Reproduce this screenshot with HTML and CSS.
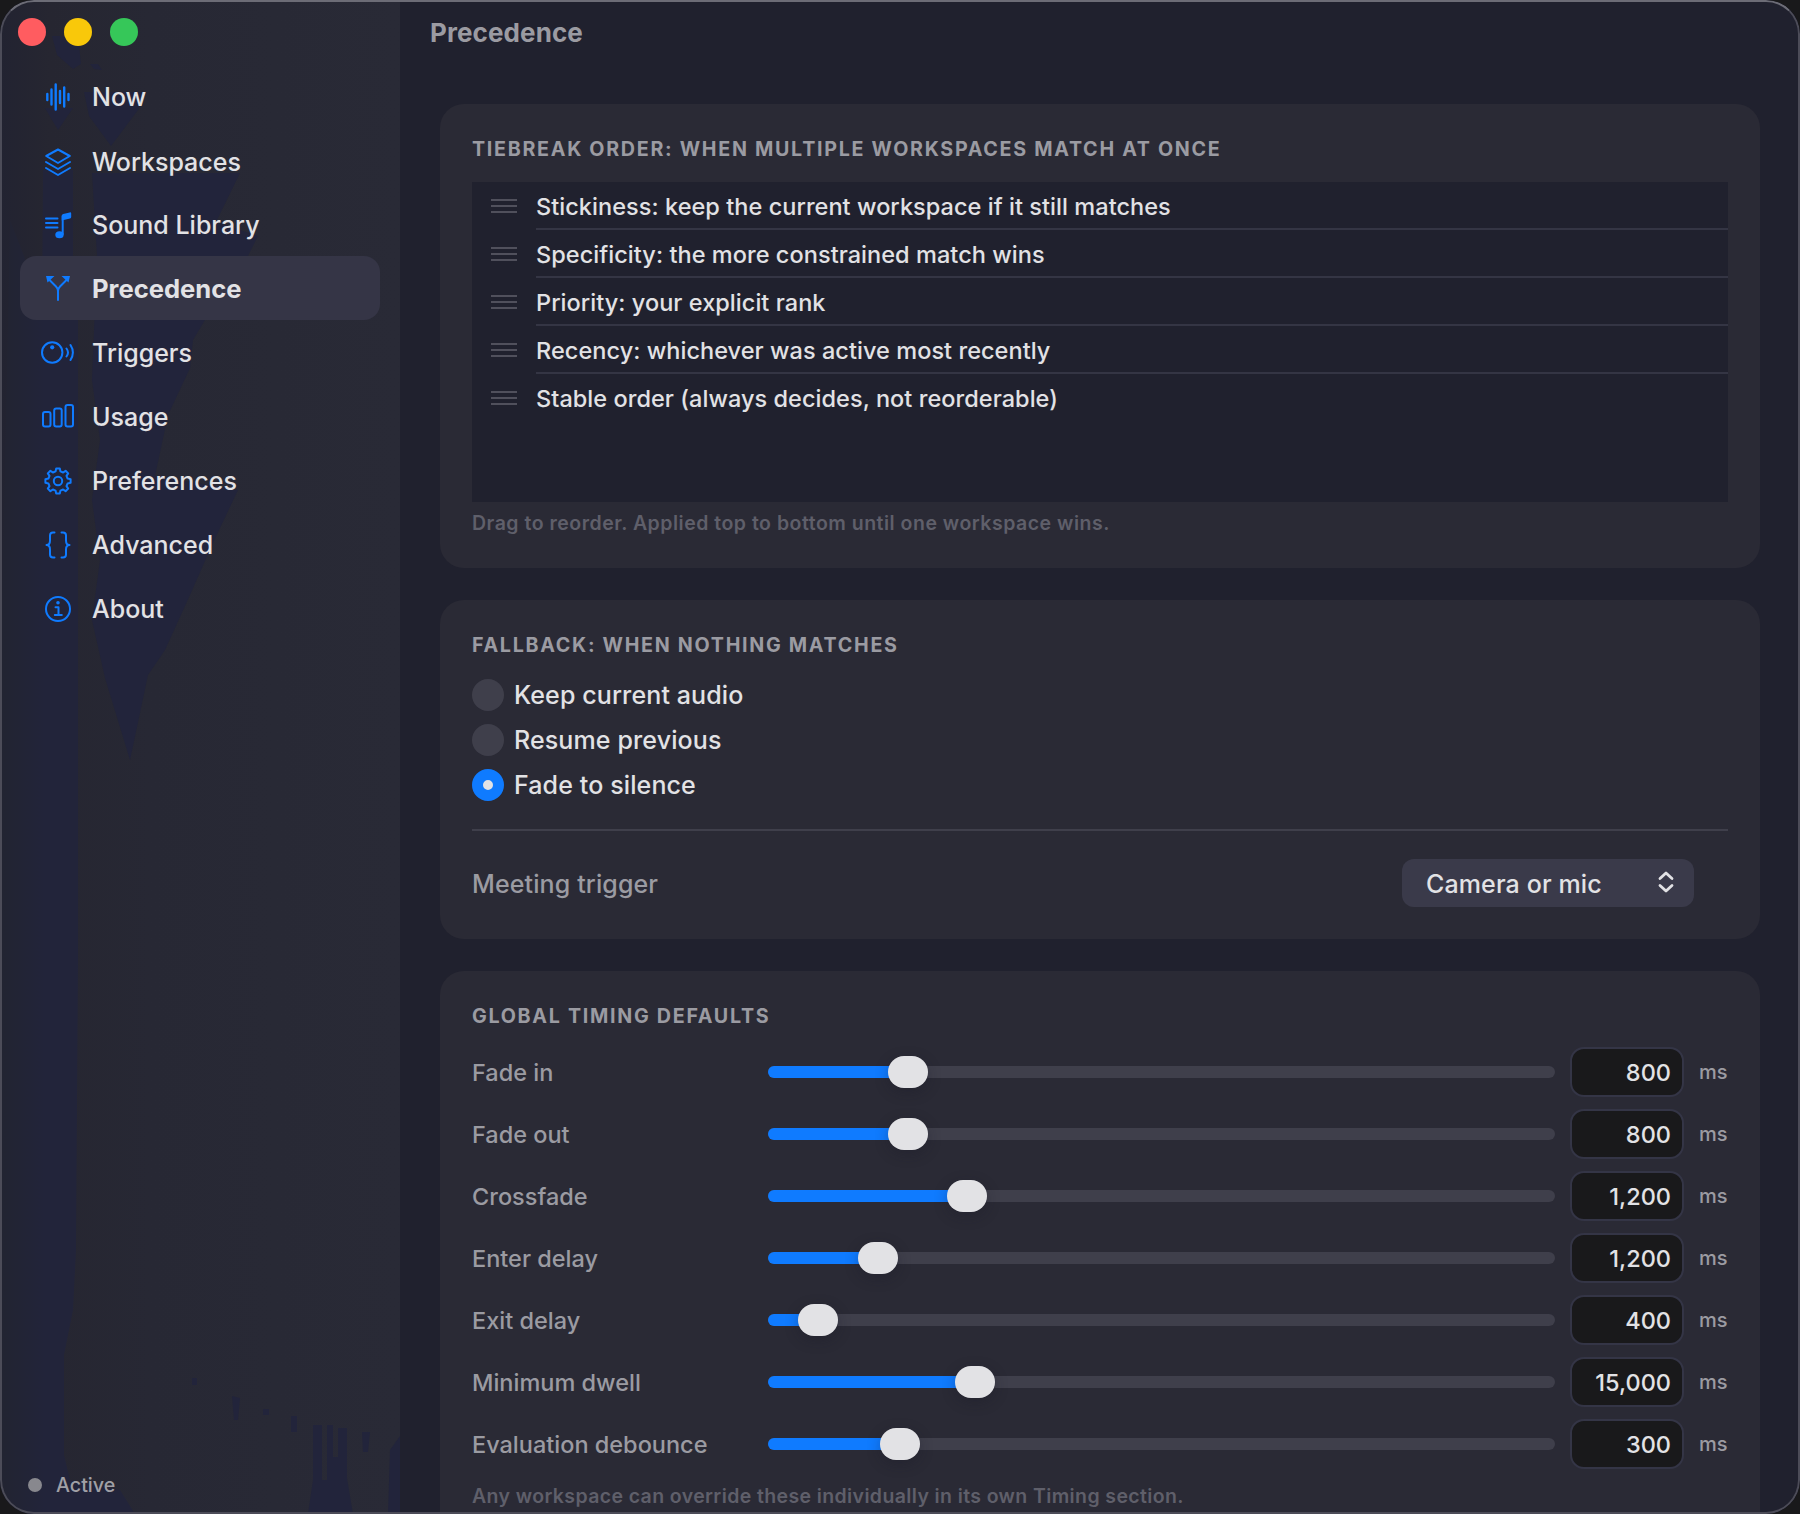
FILE: index.html
```html
<!DOCTYPE html>
<html lang="en">
<head>
    <meta charset="utf-8">
    <title>Precedence</title>
    <link rel="stylesheet" href="styles.css">
</head>
<body>
    <div class="window">
        <aside class="sidebar">
            <svg class="backdrop" viewBox="0 0 400 1514" preserveAspectRatio="none">
                <defs>
                    <linearGradient id="edge" gradientUnits="userSpaceOnUse" x1="0" y1="0" x2="44" y2="0">
                        <stop offset="0" stop-color="#222431"/>
                        <stop offset="1" stop-color="#22243a"/>
                    </linearGradient>
                </defs>
                <path fill="url(#edge)" d="M43 170H73V256H78V960L76 1250L73 1310L64 1355V1455L70 1480L120 1490L135 1514H0V700L10 220L24 256L42 320Z"/>
                <path d="M45 108h28l-15 22zM84 92h60l-6 18-27 36-22-30zM52 36h26l3 28-8 5-16-14zM90 64h8l4 6-8-1z"/>
                <path d="M92 173H240L216 222L258 236L248 256L205 320L193 340H193L190 368L168 415L155 476L238 490L212 545L190 595L165 650L148 675L130 760L105 678L92 620L100 560L92 500L100 440L92 380L97 256Z"/>
                <path d="M313 1425h9v55h5v-55h6v32h5v-29h9v50l6 36h-45l5-34zM232 1396l8 2-2 22h-4zM192 1378h5v7h-5zM263 1409h6v6h-6zM291 1416h6v16h-6zM362 1432h8l-2 20h-5zM400 1436v78h-12l2-64z"/>
            </svg>
            <div class="lights">
                <span class="light red"></span>
                <span class="light yellow"></span>
                <span class="light green"></span>
            </div>
            <nav>
                <a class="item">
                    <svg viewBox="0 0 36 36"><path class="bars" d="M7.3 15v6M11.5 10.5v15M15.7 5.5v25M20 12v12M24.2 8.5v19M28.5 15v6"/></svg>
                    <span>Now</span>
                </a>
                <a class="item workspaces">
                    <svg viewBox="0 0 36 36"><path d="M18 5.5L29.8 12 18 19 6.2 12zM6 18l12 7 12-7M6 24l12 7 12-7"/></svg>
                    <span>Workspaces</span>
                </a>
                <a class="item">
                    <svg viewBox="0 0 36 36"><path d="M6 11.5H17.5M6 16H17.5M6 20.5H17.5M22.7 27V9"/><path class="fill" d="M21.7 9q0-1.6 1.5-2l6.5-1.6q1.5-.3 1.5 1.2v3.4q0 1.2-1.2 1.5L21.7 13.5z"/><ellipse class="fill" cx="19.500" cy="27.800" rx="4.200" ry="3.500"/></svg>
                    <span>Sound Library</span>
                </a>
                <a class="item selected">
                    <svg viewBox="0 0 36 36"><path d="M18 30v-9q0-2.500-2-4.500l-7-7M18 21q0-2.500 2-4.500l7-7"/><path class="fill" d="M6 6h8.500L7.500 12.500zM30 6h-8.500l7 6.500z"/></svg>
                    <span>Precedence</span>
                </a>
                <a class="item">
                    <svg viewBox="0 0 36 36"><circle cx="12.200" cy="17.500" r="10.200"/><circle class="fill" cx="12.200" cy="12.300" r="2.100"/><path d="M26.500 13.500q3 4 0 8M30.500 10q4.800 7.500 0 15"/></svg>
                    <span>Triggers</span>
                </a>
                <a class="item">
                    <svg viewBox="0 0 36 36"><rect x="3" y="13" width="7.500" height="14.500" rx="2"/><rect x="14.200" y="9.500" width="7.500" height="18" rx="2"/><rect x="25.500" y="6" width="7.500" height="21.500" rx="2"/></svg>
                    <span>Usage</span>
                </a>
                <a class="item">
                    <svg viewBox="0 0 36 36"><circle cx="18" cy="18" r="4.200"/><path d="M15.600 8.400L16.200 5.400H19.800L20.400 8.400L23.100 9.500L25.600 7.800L28.200 10.400L26.500 12.900L27.600 15.600L30.600 16.200V19.800L27.600 20.400L26.500 23.100L28.200 25.600L25.600 28.200L23.100 26.500L20.400 27.600L19.800 30.600H16.200L15.600 27.600L12.900 26.500L10.400 28.200L7.800 25.600L9.500 23.100L8.400 20.400L5.400 19.800V16.200L8.400 15.600L9.500 12.900L7.800 10.400L10.400 7.800L12.900 9.500Z"/></svg>
                    <span>Preferences</span>
                </a>
                <a class="item">
                    <svg viewBox="0 0 36 36"><path d="M14.500 5.500h-1.500q-3 0-3 3v5q0 4.500-3.500 4.500 3.500 0 3.500 4.500v5q0 3 3 3h1.500M21.500 5.500h1.500q3 0 3 3v5q0 4.500 3.500 4.500-3.500 0-3.500 4.500v5q0 3-3 3h-1.500"/></svg>
                    <span>Advanced</span>
                </a>
                <a class="item">
                    <svg viewBox="0 0 36 36"><circle cx="18" cy="18" r="12"/><circle class="fill" cx="18" cy="11.800" r="1.800"/><path d="M15.500 16.300h3v7.700M14.800 24h7"/></svg>
                    <span>About</span>
                </a>
            </nav>
            <div class="status"><span class="dot"></span>Active</div>
        </aside>

        <main>
            <h1>Precedence</h1>

            <section class="card tiebreak">
                <h2>TIEBREAK ORDER: WHEN MULTIPLE WORKSPACES MATCH AT ONCE</h2>
                <ul class="order">
                    <li><span class="grip"></span><span class="rule">Stickiness: keep the current workspace if it still matches</span></li>
                    <li><span class="grip"></span><span class="rule">Specificity: the more constrained match wins</span></li>
                    <li><span class="grip"></span><span class="rule">Priority: your explicit rank</span></li>
                    <li><span class="grip"></span><span class="rule">Recency: whichever was active most recently</span></li>
                    <li><span class="grip"></span><span class="rule">Stable order (always decides, not reorderable)</span></li>
                </ul>
                <p class="note">Drag to reorder. Applied top to bottom until one workspace wins.</p>
            </section>

            <section class="card fallback">
                <h2>FALLBACK: WHEN NOTHING MATCHES</h2>
                <div class="radios">
                    <label><span class="radio"></span>Keep current audio</label>
                    <label><span class="radio"></span>Resume previous</label>
                    <label><span class="radio on"></span>Fade to silence</label>
                </div>
                <div class="meeting">
                    <span class="name">Meeting trigger</span>
                    <div class="select">
                        <span>Camera or mic</span>
                        <svg viewBox="0 0 16 22"><path d="M2 7.500L8 2l6 5.500M2 14.500L8 20l6-5.500"/></svg>
                    </div>
                </div>
            </section>

            <section class="card timing">
                <h2>GLOBAL TIMING DEFAULTS</h2>
                <div class="row">
                    <span class="label">Fade in</span>
                    <div class="track"><div class="bar" style="width: 140px"></div></div>
                    <span class="value">800</span><span class="unit">ms</span>
                </div>
                <div class="row">
                    <span class="label">Fade out</span>
                    <div class="track"><div class="bar" style="width: 140px"></div></div>
                    <span class="value">800</span><span class="unit">ms</span>
                </div>
                <div class="row">
                    <span class="label">Crossfade</span>
                    <div class="track"><div class="bar" style="width: 199px"></div></div>
                    <span class="value">1,200</span><span class="unit">ms</span>
                </div>
                <div class="row">
                    <span class="label">Enter delay</span>
                    <div class="track"><div class="bar" style="width: 110px"></div></div>
                    <span class="value">1,200</span><span class="unit">ms</span>
                </div>
                <div class="row">
                    <span class="label">Exit delay</span>
                    <div class="track"><div class="bar" style="width: 50px"></div></div>
                    <span class="value">400</span><span class="unit">ms</span>
                </div>
                <div class="row">
                    <span class="label">Minimum dwell</span>
                    <div class="track"><div class="bar" style="width: 207px"></div></div>
                    <span class="value">15,000</span><span class="unit">ms</span>
                </div>
                <div class="row">
                    <span class="label">Evaluation debounce</span>
                    <div class="track"><div class="bar" style="width: 132px"></div></div>
                    <span class="value">300</span><span class="unit">ms</span>
                </div>
                <p class="note">Any workspace can override these individually in its own Timing section.</p>
            </section>
        </main>
    </div>
</body>
</html>
```
FILE: styles.css
```css
* {
    box-sizing: border-box;
}
body {
    margin: 0;
    background: #19191b;
    color: #e2e2e5;
    font-family: Inter, "Liberation Sans", sans-serif;
    font-size: 25px;
}
h1, h2, p, ul {
    margin: 0;
    padding: 0;
}
.window {
    position: relative;
    display: flex;
    width: 1800px;
    height: 1514px;
    border-radius: 34px;
    overflow: hidden;
    background: #20212e;
}
/* Thin light frame around the whole window */
.window::after {
    content: "";
    position: absolute;
    inset: 0;
    border: 2px solid #4c4c58;
    border-top-color: #6c6c76;
    border-radius: 34px;
}

/* Sidebar */
.sidebar {
    position: relative;
    display: flex;
    flex-direction: column;
    flex: none;
    width: 400px;
    background: linear-gradient(90deg, #222331 0, #262631 50px, #272834 150px, #292a36 100%);
}
.backdrop {
    position: absolute;
    left: 0;
    top: 0;
    width: 400px;
    height: 1514px;
    fill: #22243b;
}
.lights {
    position: relative;
    display: flex;
    gap: 18px;
    height: 64px;
    padding: 18px 0 0 18px;
}
.light {
    width: 28px;
    height: 28px;
    border-radius: 50%;
}
.red { background: #ff5c60; }
.yellow { background: #f9c80a; }
.green { background: #36c759; }
nav {
    position: relative;
    padding: 0 20px;
}
.item {
    display: flex;
    align-items: center;
    gap: 16px;
    height: 64px;
    padding: 2px 0 0 20px;
    border-radius: 16px;
    font-weight: 500;
}
.item svg {
    width: 36px;
    height: 36px;
    fill: none;
    stroke: #0f7bff;
    stroke-width: 2;
    stroke-linecap: round;
    stroke-linejoin: round;
}
.item .bars {
    stroke-width: 2.4;
}
.item .fill {
    fill: #0f7bff;
    stroke: none;
}
.workspaces {
    padding-top: 4px;
}
.selected {
    padding-top: 0;
    background: #353546;
    font-size: 25.6px;
    font-weight: 700;
}
.status {
    position: relative;
    display: flex;
    align-items: center;
    gap: 14px;
    height: 58px;
    margin-top: auto;
    padding-left: 28px;
    font-size: 19.7px;
    font-weight: 500;
    color: #a0a0a6;
}
.dot {
    width: 14px;
    height: 14px;
    border-radius: 50%;
    background: #88888e;
}

/* Content */
main {
    flex: 1;
    padding: 0 40px;
}
h1 {
    height: 104px;
    margin-left: -10px;
    line-height: 65px;
    font-size: 26px;
    font-weight: 700;
    letter-spacing: 0.1px;
    color: #9b9ba2;
}
.card {
    padding: 32px;
    margin-bottom: 32px;
    border-radius: 24px;
    background: #2a2a35;
}
h2 {
    height: 46px;
    line-height: 26px;
    font-size: 19.7px;
    font-weight: 700;
    letter-spacing: 1.7px;
    color: #9b9ba2;
}
.tiebreak { height: 464px; }
.fallback { height: 339px; }
.timing { height: 600px; }
.note {
    line-height: 24px;
    font-size: 19.5px;
    font-weight: 600;
    letter-spacing: 0.5px;
    color: #5f5f6a;
}
.order {
    height: 320px;
    margin-bottom: 9px;
    list-style: none;
    background: #20212e;
    font-size: 23.5px;
    font-weight: 500;
    letter-spacing: 0.05px;
}
.order li {
    display: flex;
    align-items: center;
    height: 48px;
    padding-left: 19px;
}
.grip {
    width: 26px;
    height: 14px;
    margin-right: 19px;
    border-top: 2px solid #50505c;
    border-bottom: 2px solid #50505c;
    background: linear-gradient(#50505c, #50505c) 0 4px / 100% 2px no-repeat;
}
.rule {
    flex: 1;
    height: 48px;
    line-height: 49px;
    border-bottom: 2px solid #343544;
}
.order li:last-child .rule {
    border-bottom: none;
}
.radios {
    padding-top: 1px;
    height: 153px;
    border-bottom: 2px solid #3f3f4b;
}
.radios label {
    display: flex;
    align-items: center;
    gap: 10px;
    height: 32px;
    margin-bottom: 13px;
    font-weight: 500;
    letter-spacing: 0.12px;
}
.radio {
    width: 32px;
    height: 32px;
    border-radius: 50%;
    background: #3f3f4b;
}
.radio.on {
    border: 11px solid #0f7bff;
    background: #e2e2e5;
}
.meeting {
    display: flex;
    align-items: center;
    justify-content: space-between;
    padding: 28px 34px 0 0;
    letter-spacing: 0.12px;
}
.name, .label {
    color: #9b9ba2;
    font-weight: 500;
}
.name {
    padding-top: 1px;
}
.select {
    display: flex;
    align-items: center;
    justify-content: space-between;
    width: 292px;
    height: 48px;
    padding: 1px 20px 0 24px;
    border-radius: 12px;
    background: #3a3a4a;
    font-weight: 500;
}
.select svg {
    width: 16px;
    height: 22px;
    margin-top: -3px;
    fill: none;
    stroke: #e2e2e5;
    stroke-width: 2.8;
    stroke-linecap: round;
    stroke-linejoin: round;
}
.timing h2 {
    height: 44px;
}
.row {
    display: flex;
    align-items: center;
    height: 50px;
    margin-bottom: 12px;
    font-size: 23.5px;
}
.label {
    width: 296px;
}
.track {
    width: 787px;
    height: 12px;
    border-radius: 6px;
    background: #3f3f4b;
}
.bar {
    position: relative;
    height: 12px;
    border-radius: 6px;
    background: #0f7bff;
}
/* Slider knob, centred on the end of the filled part */
.bar::after {
    content: "";
    position: absolute;
    top: -10px;
    right: -20px;
    width: 40px;
    height: 32px;
    border-radius: 16px;
    background: #e2e2e5;
    box-shadow: 0 4px 14px rgba(24, 24, 38, 0.3);
}
.value {
    width: 114px;
    height: 50px;
    margin-left: 15px;
    padding-right: 11px;
    border: 2px solid #343546;
    border-radius: 14px;
    background: #19191b;
    line-height: 48px;
    text-align: right;
    font-weight: 500;
}
.unit {
    margin-left: 15px;
    font-size: 20px;
    font-weight: 500;
    color: #9b9ba2;
}
.timing .note {
    padding-top: 3px;
    letter-spacing: 0.38px;
}
```
